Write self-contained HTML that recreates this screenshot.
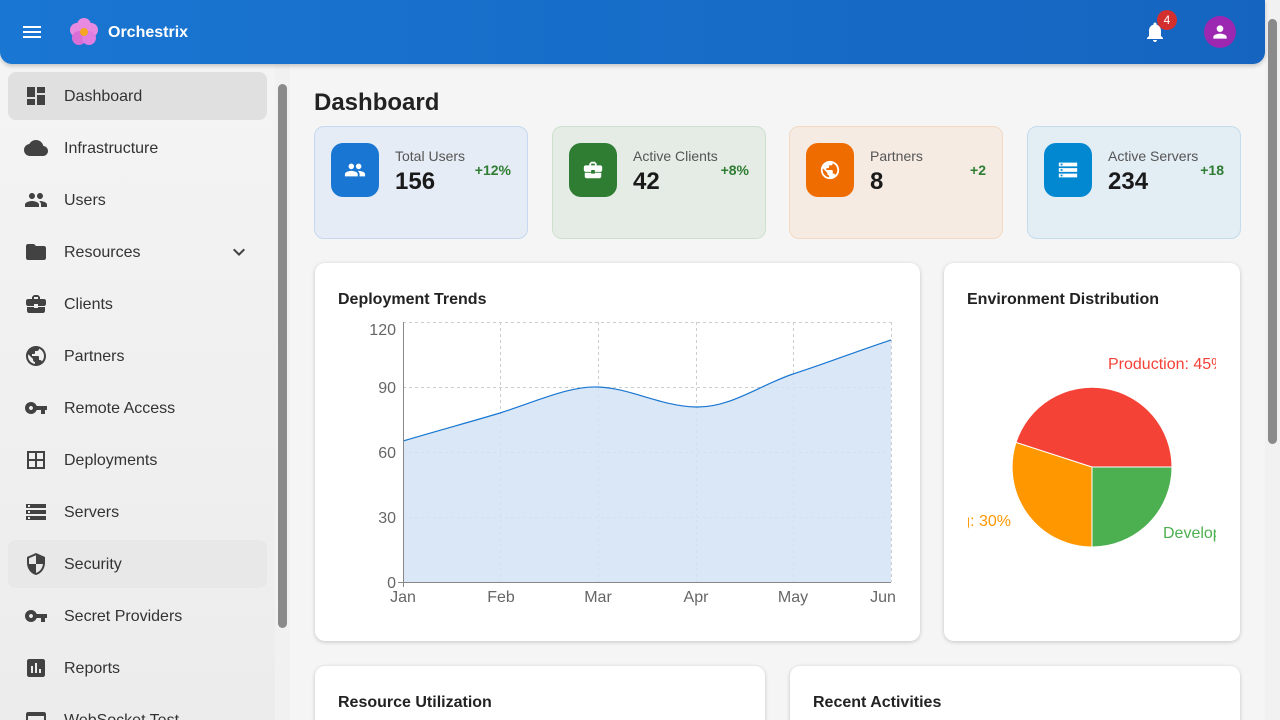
<!DOCTYPE html>
<html style="height:720px;overflow:hidden"><head><style>
*{box-sizing:border-box;margin:0;padding:0}
body{width:1280px;height:720px;overflow:hidden;background:#f5f5f5;font-family:"Liberation Sans",sans-serif;position:relative}
.hdr{position:absolute;left:0;top:0;width:1265px;height:64px;background:linear-gradient(90deg,#1976d2,#1565c0);border-radius:0 0 12px 12px;color:#fff;box-shadow:0 2px 4px rgba(0,0,0,.2);z-index:2}
.side{position:absolute;left:0;top:64px;width:275px;height:656px;background:linear-gradient(180deg,#f4f4f4,#ececec);overflow:hidden}
.item{position:absolute;left:8px;width:259px;height:48px;border-radius:8px;display:flex;align-items:center;font-size:16px;color:#333}
.item svg{position:absolute;left:16px;width:24px;height:24px;fill:#424242}
.item span{position:absolute;left:56px;top:16px}
.sb{position:absolute;left:275px;top:64px;width:15px;height:656px;background:#f1f1f1}
.psb{position:absolute;left:1265px;top:0;width:15px;height:720px;background:#f1f1f1}
.card{position:absolute;top:126px;width:214px;height:113px;border-radius:10px;border:1px solid}
.card .ic{position:absolute;left:16px;top:16px;width:48px;height:54px;border-radius:12px;display:flex;align-items:center;justify-content:center}
.card .ic svg{width:22px;height:22px;fill:#fff}
.card .t{position:absolute;left:80px;top:21px;font-size:14px;color:#555}
.card .v{position:absolute;left:80px;top:41px;font-size:24px;font-weight:bold;color:#1a1a1a}
.card .d{position:absolute;right:16px;top:35px;font-size:14px;font-weight:bold;color:#2e7d32}
.panel{position:absolute;background:#fff;border-radius:10px;box-shadow:0 1px 4px rgba(0,0,0,.2)}
.panel h3{position:absolute;left:23px;top:28px;font-size:16px;color:#222}
.clip{position:absolute;left:0;top:0;width:1265px;height:720px;overflow:hidden}
</style></head><body>
<div class="clip">
<div style="position:absolute;left:314px;top:89px;font-size:24px;font-weight:bold;color:#222">Dashboard</div>

<div class="card" style="left:314px;background:#e6ecf5;border-color:#c5d8ef"><div class="ic" style="background:#1976d2"><svg viewBox="0 0 24 24"><path d="M16 11c1.66 0 2.99-1.34 2.99-3S17.66 5 16 5c-1.66 0-3 1.340-3 3s1.34 3 3 3zm-8 0c1.66 0 2.99-1.34 2.99-3S9.66 5 8 5C6.34 5 5 6.34 5 8s1.34 3 3 3zm0 2c-2.33 0-7 1.17-7 3.5V19h14v-2.5c0-2.33-4.67-3.5-7-3.5zm8 0c-.29 0-.62.02-.97.05 1.16.84 1.97 1.97 1.97 3.45V19h6v-2.5c0-2.33-4.67-3.5-7-3.5z"/></svg></div><div class="t">Total Users</div><div class="v">156</div><div class="d">+12%</div></div>
<div class="card" style="left:552px;background:#e5ece5;border-color:#cde0cd"><div class="ic" style="background:#2e7d32"><svg viewBox="0 0 24 24"><path d="M10 16v-1H3.01L3 19c0 1.11.89 2 2 2h14c1.11 0 2-.89 2-2v-4h-7v1h-4zm10-9h-4.01V5l-2-2h-4l-2 2v2H4c-1.1 0-2 .9-2 2v3c0 1.11.89 2 2 2h6v-2h4v2h6c1.1 0 2-.9 2-2V9c0-1.1-.9-2-2-2zm-6 0h-4V5h4v2z"/></svg></div><div class="t">Active Clients</div><div class="v">42</div><div class="d">+8%</div></div>
<div class="card" style="left:789px;background:#f5ebe3;border-color:#f3d8c2"><div class="ic" style="background:#ef6c00"><svg viewBox="0 0 24 24"><path d="M12 2C6.48 2 2 6.48 2 12s4.48 10 10 10 10-4.48 10-10S17.52 2 12 2zm-1 17.93c-3.950-.49-7-3.85-7-7.93 0-.62.08-1.21.21-1.79L9 15v1c0 1.1.9 2 2 2v1.93zm6.9-2.54c-.26-.81-1-1.39-1.9-1.39h-1v-3c0-.55-.45-1-1-1H8v-2h2c.55 0 1-.45 1-1V7h2c1.1 0 2-.9 2-2v-.41c2.93 1.19 5 4.06 5 7.41 0 2.08-.8 3.97-2.1 5.39z"/></svg></div><div class="t">Partners</div><div class="v">8</div><div class="d">+2</div></div>
<div class="card" style="left:1027px;background:#e3edf4;border-color:#c4dcec"><div class="ic" style="background:#0288d1"><svg viewBox="0 0 24 24"><path d="M2 20h20v-4H2v4zm2-3h2v2H4v-2zM2 4v4h20V4H2zm4 3H4V5h2v2zm-4 7h20v-4H2v4zm2-3h2v2H4v-2z"/></svg></div><div class="t">Active Servers</div><div class="v">234</div><div class="d">+18</div></div>

<div class="panel" style="left:315px;top:263px;width:605px;height:378px"><h3>Deployment Trends</h3></div>
<div class="panel" style="left:944px;top:263px;width:296px;height:378px;overflow:hidden"><h3>Environment Distribution</h3></div>
<div class="panel" style="left:315px;top:666px;width:450px;height:80px"><h3>Resource Utilization</h3></div>
<div class="panel" style="left:790px;top:666px;width:450px;height:80px"><h3>Recent Activities</h3></div>

<svg style="position:absolute;left:0;top:0" width="1265" height="720">
<g stroke="#ccc" stroke-dasharray="3,3" stroke-width="1">
<line x1="403" y1="322.5" x2="891" y2="322.5"/><line x1="403" y1="387.5" x2="891" y2="387.5"/><line x1="403" y1="452.5" x2="891" y2="452.5"/><line x1="403" y1="517.5" x2="891" y2="517.5"/>
<line x1="500.5" y1="322" x2="500.5" y2="582"/><line x1="598.5" y1="322" x2="598.5" y2="582"/><line x1="696.5" y1="322" x2="696.5" y2="582"/><line x1="793.5" y1="322" x2="793.5" y2="582"/><line x1="891.5" y1="322" x2="891.5" y2="582"/>
</g>
<path d="M403 441 C440 430 470 422 500 413 C540 400 570 386 598 387 C630 388 660 406 696 407 C730 408 760 385 793 374 C830 362 860 350 891 340 L891 582 L403 582Z" fill="#d4e3f5" fill-opacity="0.85"/>
<path d="M403 441 C440 430 470 422 500 413 C540 400 570 386 598 387 C630 388 660 406 696 407 C730 408 760 385 793 374 C830 362 860 350 891 340" fill="none" stroke="#1976d2" stroke-width="1.2"/>
<g stroke="#888"><line x1="403.5" y1="322" x2="403.5" y2="587"/><line x1="398" y1="582.5" x2="891" y2="582.5"/></g>
<g font-family="Liberation Sans" font-size="16" fill="#666" text-anchor="end"><text x="396" y="335">120</text><text x="396" y="393">90</text><text x="396" y="458">60</text><text x="396" y="523">30</text><text x="396" y="588">0</text></g>
<g font-family="Liberation Sans" font-size="16" fill="#666" text-anchor="middle"><text x="403" y="602">Jan</text><text x="501" y="602">Feb</text><text x="598" y="602">Mar</text><text x="696" y="602">Apr</text><text x="793" y="602">May</text><text x="883" y="602">Jun</text></g>
<path d="M1092 467 L1172 467 A80 80 0 0 1 1092 547Z" fill="#4caf50" stroke="#fff"/>
<path d="M1092 467 L1092 547 A80 80 0 0 1 1016 442.3Z" fill="#ff9800" stroke="#fff"/>
<path d="M1092 467 L1016 442.3 A80 80 0 0 1 1172 467Z" fill="#f44336" stroke="#fff"/>
<clipPath id="c"><rect x="968" y="300" width="248" height="300"/></clipPath>
<g clip-path="url(#c)" font-family="Liberation Sans" font-size="16"><text x="1108" y="369" fill="#f44336">Production: 45%</text><text x="1163" y="538" fill="#4caf50">Development: 25%</text><text x="1011" y="526" fill="#ff9800" text-anchor="end">Staging: 30%</text></g>
</svg>
</div>

<div class="hdr">
<div style="position:absolute;left:23px;top:26px;width:18px;height:2px;background:#fff;box-shadow:0 5px 0 #fff,0 10px 0 #fff"></div>
<svg style="position:absolute;left:68px;top:16px" width="32" height="32" viewBox="0 0 32 32"><g fill="#e88ae0"><circle cx="16" cy="9" r="7"/><circle cx="9" cy="14" r="7"/><circle cx="23" cy="14" r="7"/><circle cx="11" cy="22" r="7" fill="#d96fd6"/><circle cx="21" cy="22" r="7" fill="#e07de0"/></g><circle cx="16" cy="16" r="4" fill="#f5a623"/></svg>
<div style="position:absolute;left:108px;top:24px;font-size:16px;font-weight:bold">Orchestrix</div>
<svg style="position:absolute;left:1143px;top:20px" width="24" height="24" viewBox="0 0 24 24" fill="#fff"><path d="M12 22c1.1 0 2-.9 2-2h-4c0 1.1.9 2 2 2zm6-6v-5c0-3.07-1.64-5.64-4.5-6.32V4c0-.83-.67-1.5-1.5-1.5s-1.5.67-1.5 1.5v.68C7.63 5.36 6 7.92 6 11v5l-2 2v1h16v-1l-2-2z"/></svg>
<div style="position:absolute;left:1157px;top:10px;width:20px;height:20px;border-radius:50%;background:#d32f2f;font-size:12px;text-align:center;line-height:20px">4</div>
<div style="position:absolute;left:1204px;top:16px;width:32px;height:32px;border-radius:50%;background:#9c27b0"><svg style="margin:6px" width="20" height="20" viewBox="0 0 24 24" fill="#fff"><path d="M12 12c2.21 0 4-1.79 4-4s-1.79-4-4-4-4 1.79-4 4 1.79 4 4 4zm0 2c-2.67 0-8 1.34-8 4v2h16v-2c0-2.660-5.33-4-8-4z"/></svg></div>
</div>
<div class="side">
<div class="item" style="top:8px;background:#e0e0e0"><svg viewBox="0 0 24 24"><path d="M3 13h8V3H3v10zm0 8h8v-6H3v6zm10 0h8V11h-8v10zm0-18v6h8V3h-8z"/></svg><span>Dashboard</span></div>
<div class="item" style="top:60px"><svg viewBox="0 0 24 24"><path d="M19.35 10.04C18.67 6.59 15.64 4 12 4 9.11 4 6.6 5.64 5.35 8.04 2.34 8.36 0 10.91 0 14c0 3.31 2.69 6 6 6h13c2.76 0 5-2.24 5-5 0-2.64-2.05-4.78-4.65-4.96z"/></svg><span>Infrastructure</span></div>
<div class="item" style="top:112px"><svg viewBox="0 0 24 24"><path d="M16 11c1.66 0 2.99-1.34 2.99-3S17.66 5 16 5c-1.66 0-3 1.34-3 3s1.34 3 3 3zm-8 0c1.66 0 2.99-1.34 2.99-3S9.66 5 8 5C6.34 5 5 6.34 5 8s1.34 3 3 3zm0 2c-2.33 0-7 1.17-7 3.5V19h14v-2.5c0-2.33-4.67-3.5-7-3.5zm8 0c-.29 0-.62.02-.97.05 1.16.84 1.97 1.97 1.97 3.45V19h6v-2.5c0-2.33-4.67-3.5-7-3.5z"/></svg><span>Users</span></div>
<div class="item" style="top:164px"><svg viewBox="0 0 24 24"><path d="M10 4H4c-1.1 0-2 .9-2 2v12c0 1.1.9 2 2 2h16c1.1 0 2-.9 2-2V8c0-1.1-.9-2-2-2h-8l-2-2z"/></svg><span>Resources</span><svg style="left:219px" viewBox="0 0 24 24"><path d="M16.59 8.59 12 13.17 7.41 8.59 6 10l6 6 6-6z"/></svg></div>
<div class="item" style="top:216px"><svg viewBox="0 0 24 24"><path d="M10 16v-1H3.01L3 19c0 1.11.89 2 2 2h14c1.11 0 2-.89 2-2v-4h-7v1h-4zm10-9h-4.01V5l-2-2h-4l-2 2v2H4c-1.1 0-2 .9-2 2v3c0 1.11.89 2 2 2h6v-2h4v2h6c1.1 0 2-.9 2-2V9c0-1.1-.9-2-2-2zm-6 0h-4V5h4v2z"/></svg><span>Clients</span></div>
<div class="item" style="top:268px"><svg viewBox="0 0 24 24"><path d="M12 2C6.48 2 2 6.48 2 12s4.48 10 10 10 10-4.48 10-10S17.52 2 12 2zm-1 17.93c-3.95-.49-7-3.85-7-7.93 0-.62.08-1.21.21-1.79L9 15v1c0 1.1.9 2 2 2v1.93zm6.9-2.54c-.26-.81-1-1.39-1.9-1.39h-1v-3c0-.55-.45-1-1-1H8v-2h2c.55 0 1-.45 1-1V7h2c1.1 0 2-.9 2-2v-.41c2.93 1.19 5 4.06 5 7.41 0 2.08-.8 3.97-2.1 5.39z"/></svg><span>Partners</span></div>
<div class="item" style="top:320px"><svg viewBox="0 0 24 24"><path d="M12.65 10C11.83 7.67 9.61 6 7 6c-3.31 0-6 2.69-6 6s2.69 6 6 6c2.61 0 4.83-1.67 5.65-4H17v4h4v-4h2v-4H12.65zM7 14c-1.1 0-2-.9-2-2s.9-2 2-2 2 .9 2 2-.9 2-2 2z"/></svg><span>Remote Access</span></div>
<div class="item" style="top:372px"><svg viewBox="0 0 24 24"><path d="M3 3v18h18V3H3zm8 16H5v-6h6v6zm0-8H5V5h6v6zm8 8h-6v-6h6v6zm0-8h-6V5h6v6z"/></svg><span>Deployments</span></div>
<div class="item" style="top:424px"><svg viewBox="0 0 24 24"><path d="M2 20h20v-4H2v4zm2-3h2v2H4v-2zM2 4v4h20V4H2zm4 3H4V5h2v2zm-4 7h20v-4H2v4zm2-3h2v2H4v-2z"/></svg><span>Servers</span></div>
<div class="item" style="top:476px;background:#e8e8e8"><svg viewBox="0 0 24 24"><path d="M12 1 3 5v6c0 5.55 3.84 10.74 9 12 5.16-1.26 9-6.45 9-12V5l-9-4zm0 10.99h7c-.53 4.12-3.28 7.79-7 8.94V12H5V6.3l7-3.11v8.8z"/></svg><span>Security</span></div>
<div class="item" style="top:528px"><svg viewBox="0 0 24 24"><path d="M12.65 10C11.83 7.67 9.61 6 7 6c-3.31 0-6 2.69-6 6s2.69 6 6 6c2.61 0 4.83-1.67 5.65-4H17v4h4v-4h2v-4H12.65zM7 14c-1.1 0-2-.9-2-2s.9-2 2-2 2 .9 2 2-.9 2-2 2z"/></svg><span>Secret Providers</span></div>
<div class="item" style="top:580px"><svg viewBox="0 0 24 24"><path d="M19 3H5c-1.1 0-2 .9-2 2v14c0 1.1.9 2 2 2h14c1.1 0 2-.9 2-2V5c0-1.1-.9-2-2-2zM9 17H7v-7h2v7zm4 0h-2V7h2v10zm4 0h-2v-4h2v4z"/></svg><span>Reports</span></div>
<div class="item" style="top:632px"><svg viewBox="0 0 24 24"><path d="M20 4H4c-1.1 0-2 .9-2 2v12c0 1.1.9 2 2 2h16c1.1 0 2-.9 2-2V6c0-1.1-.9-2-2-2zm0 14H4V8h16v10z"/></svg><span>WebSocket Test</span></div>
</div>
<div class="sb"><div style="position:absolute;left:3px;top:20px;width:9px;height:544px;border-radius:5px;background:#8a8a8a"></div></div>
<div class="psb"><div style="position:absolute;left:3px;top:19px;width:9px;height:425px;border-radius:5px;background:#8a8a8a"></div></div>
</body></html>
